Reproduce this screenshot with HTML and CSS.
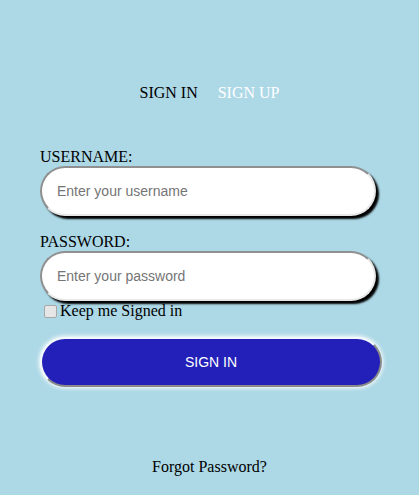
FILE: index.html
```html
<!DOCTYPE html>
<html>
<head>
<meta charset="utf-8">
<link rel="stylesheet" href="styles.css">
</head>
<body>
<div class="page">
  <div class="tabs">
    <span class="tab active">SIGN IN</span>
    <span class="tab">SIGN UP</span>
  </div>
  <form class="form">
    <label class="label" for="u">USERNAME:</label>
    <input class="field" id="u" type="text" placeholder="Enter your username">
    <label class="label label-pw" for="p">PASSWORD:</label>
    <input class="field" id="p" type="password" placeholder="Enter your password">
    <div class="keep"><input type="checkbox" class="check" id="k"><label for="k">Keep me Signed in</label></div>
    <button type="button" class="btn">SIGN IN</button>
  </form>
  <div class="forgot">Forgot Password?</div>
</div>
</body>
</html>
```
FILE: styles.css
```css
html, body {
  margin: 0;
  padding: 0;
  background: #add8e6;
  font-family: "Liberation Serif", "Times New Roman", serif;
  font-size: 16px;
}
.page {
  width: 419px;
  height: 495px;
  box-sizing: border-box;
  padding-top: 84px;
}
.tabs {
  display: flex;
  justify-content: center;
  gap: 20px;
  line-height: 18px;
}
.tab { color: #fff; }
.tab.active { color: #000; }
.form {
  margin: 46px 0 0 40px;
  width: 336px;
  display: flex;
  flex-direction: column;
}
.label {
  line-height: 18px;
  display: block;
}
.label-pw { margin-top: 17px; }
.field {
  box-sizing: border-box;
  width: 336px;
  height: 50px;
  border: 2px solid;
  border-color: #909090 #e8e8e8 #e8e8e8 #909090;
  border-radius: 25px;
  box-shadow: 3px 3px 2px #000;
  padding: 0 0 0 15px;
  font-family: "Liberation Sans", Arial, sans-serif;
  font-size: 14px;
  outline: none;
  background: #fff;
}
.field::placeholder { color: #757575; }
.keep {
  display: flex;
  align-items: center;
  line-height: 18px;
  margin-top: 1px;
}
.check {
  appearance: none;
  -webkit-appearance: none;
  box-sizing: border-box;
  margin: 0 3px 0 4px;
  width: 13px;
  height: 13px;
  border: 1px solid #a8a8a8;
  border-radius: 2px;
  background: #e6e6e6;
}
.btn {
  margin-top: 17px;
  box-sizing: border-box;
  width: 342px;
  height: 50px;
  border-radius: 25px;
  border: 2px solid;
  border-color: #f4f8fa #8a8a8a #8a8a8a #f4f8fa;
  box-shadow: 0 0 4px 1px #fff;
  background: #2220b8;
  color: #fff;
  font-family: "Liberation Sans", Arial, sans-serif;
  font-size: 14px;
}
.forgot {
  margin-top: 71px;
  text-align: center;
  line-height: 18px;
}
```
